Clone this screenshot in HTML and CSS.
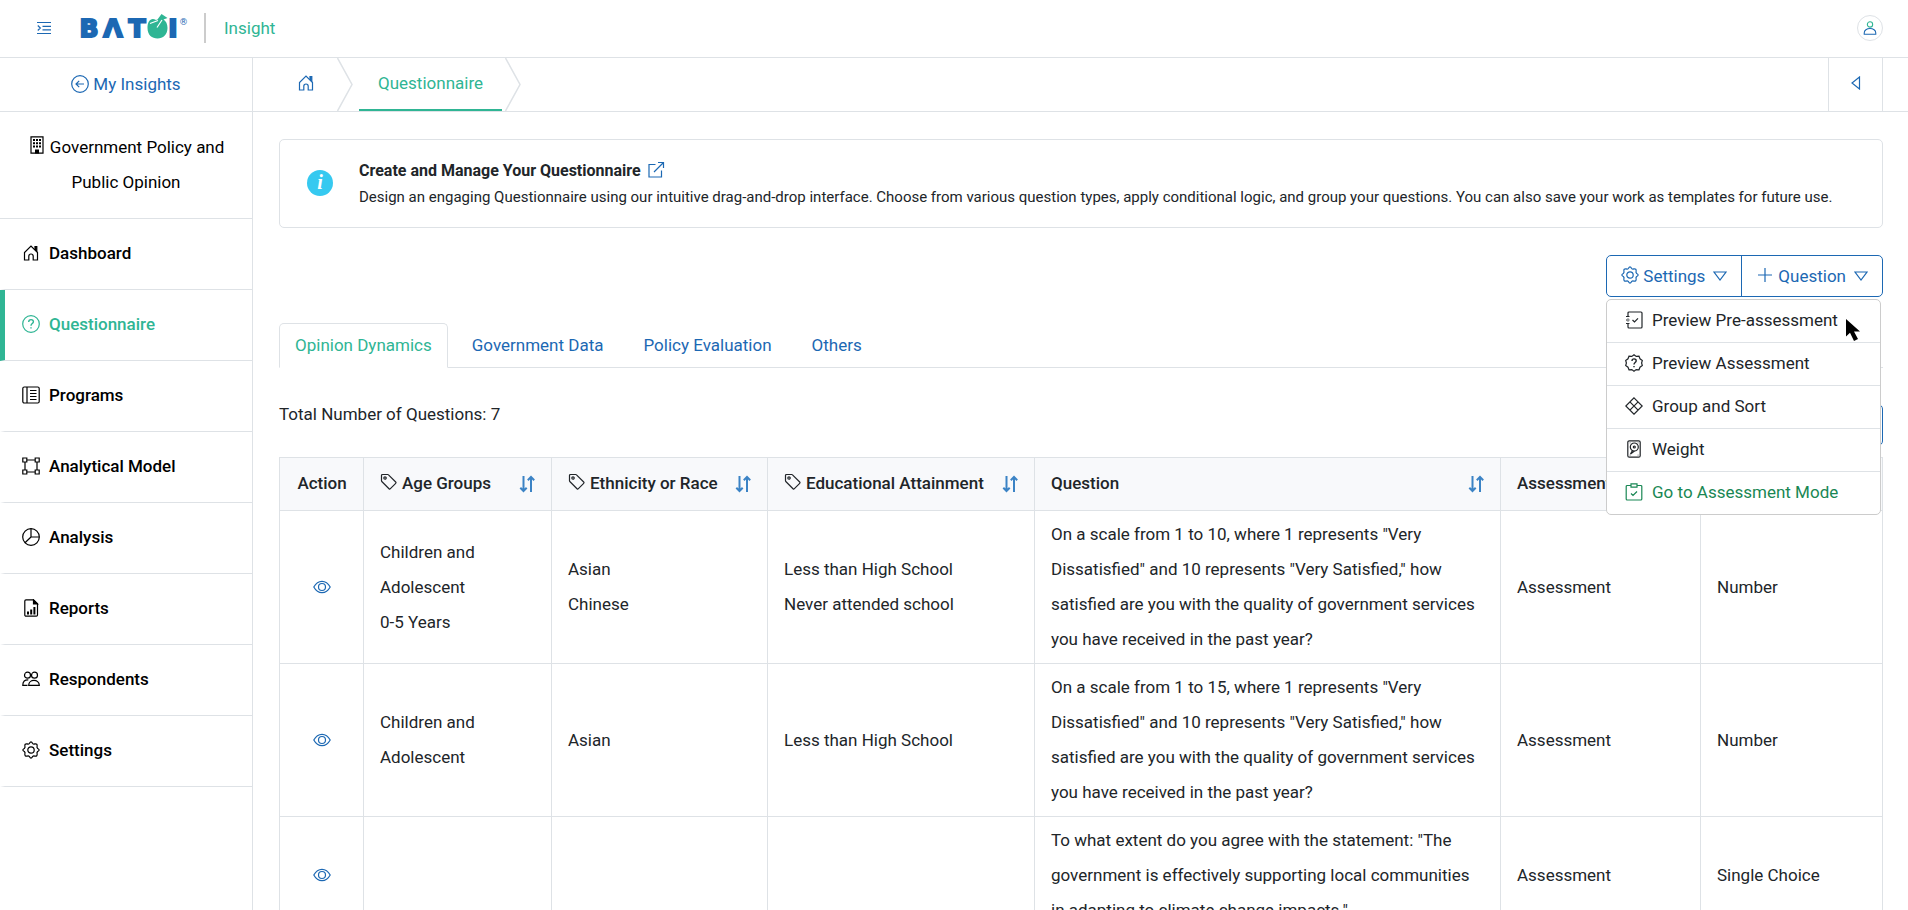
FILE: index.html
```
<!DOCTYPE html>
<html lang="en">
<head>
    <meta charset="UTF-8">
    <meta name="viewport" content="width=device-width, initial-scale=1.0">
    <title>Batoi Insight - Questionnaire</title>
    <link rel="stylesheet" href="styles.css">
</head>
<body>
    <!-- Shared icons -->
    <svg class="sprite" aria-hidden="true">
        <symbol id="i-home" viewBox="0 0 18 18">
            <path d="M2.500 16V8.500L9 2l6.500 6.500V16h-4.300v-3.800a2.200 2.200 0 0 0-4.400 0V16z"/>
            <path d="M13 6V2.500h1.800V8" fill="currentColor"/>
        </symbol>
        <symbol id="i-gear" viewBox="0 0 18 18">
            <circle cx="9" cy="9" r="3.200"/>
            <path d="M7.500 2.300Q9-.6 10.500 2.300 11.500 3.400 12.700 2.900 15.600 2.400 15.100 5.300 14.600 6.500 15.700 7.500 18.600 9 15.700 10.500 14.600 11.500 15.100 12.700 15.600 15.600 12.700 15.100 11.500 14.600 10.500 15.700 9 18.600 7.500 15.700 6.500 14.600 5.300 15.100 2.400 15.600 2.900 12.700 3.400 11.500 2.300 10.500-.6 9 2.300 7.500 3.400 6.500 2.900 5.300 2.400 2.400 5.300 2.900 6.500 3.400 7.500 2.300z"/>
        </symbol>
        <symbol id="i-eye" viewBox="0 0 18 18">
            <path d="M.8 9C3 5 5.800 3.300 9 3.300S15 5 17.200 9C15 13 12.200 14.700 9 14.700S3 13 .8 9z"/>
            <circle cx="9" cy="9" r="3.500"/>
        </symbol>
        <symbol id="i-tag" viewBox="0 0 18 18">
            <path d="M1.500 2.500a1 1 0 0 1 1-1h5.300a1 1 0 0 1 .7.3l7.200 7.200a1 1 0 0 1 0 1.400l-5.300 5.300a1 1 0 0 1-1.400 0L1.800 8.500a1 1 0 0 1-.3-.7z"/>
            <circle cx="5" cy="5" r="1.200"/>
        </symbol>
        <symbol id="i-sort" viewBox="0 0 18 18">
            <path d="M5.500 1V16M2.300 12.800L5.500 16l3.200-3.200M13 17V2M9.800 5.200L13 2l3.200 3.200"/>
        </symbol>
        <symbol id="i-down" viewBox="0 0 14 14">
            <path d="M1 3h12L7 11z"/>
        </symbol>
    </svg>

    <!-- Top header -->
    <header class="topbar">
        <button class="icon-btn" aria-label="Toggle menu">
            <svg class="icon icon-sm" viewBox="0 0 14 14"><path d="M0 1.500h14M5.500 5.300H14M5.500 8.800H14M0 12.500h14M.8 4.500L3.300 7 .8 9.500"/></svg>
        </button>
        <a class="logo" href="#" aria-label="Batoi">
            <svg width="112" height="40" viewBox="0 0 112 40">
                <g class="logo-text">
                    <text x="12" y="29">B</text>
                    <text x="36" y="29">Λ</text>
                    <text x="60" y="29">T</text>
                    <text x="96" y="29">I</text>
                </g>
                <text class="logo-mark" x="102" y="17">®</text>
                <path class="logo-apple" d="M79 12c-5-3-8.500 1-8.500 8s4.500 10.500 10 10.500 10-4 10-10.500c0-4-1.500-7-4-8.500l4-1.500L84.500 6l-4 5.500z"/>
                <path class="logo-leaf" d="M73 15.500l8-3M80 19.500l5-7.500"/>
            </svg>
        </a>
        <a class="product" href="#">Insight</a>
        <button class="avatar" aria-label="Account">
            <svg class="icon" viewBox="0 0 18 18"><circle class="head" cx="9" cy="5" r="3"/><path d="M2.500 16v-1.500a6.500 5 0 0 1 13 0V16z"/></svg>
        </button>
    </header>

    <div class="layout">
        <aside class="sidebar">
            <a class="back" href="#">
                <svg class="icon" viewBox="0 0 18 18"><circle cx="9" cy="9" r="8.300"/><path d="M13 9H5.200M8.200 5.800L5 9l3.200 3.200"/></svg>
                My Insights
            </a>
            <div class="project">
                <svg class="icon" viewBox="0 0 18 18"><path d="M3 .8h12v16.400H3z"/><path d="M9 17.500V13.500" stroke-width="4"/><path d="M5 4h8M5 7.200h8M5 10.400h8" stroke-width="2" stroke-dasharray="2 1"/></svg>
                Government Policy and Public Opinion
            </div>
            <ul class="menu">
                <li><a href="#"><svg class="icon"><use href="#i-home"/></svg>Dashboard</a></li>
                <li class="active"><a href="#"><svg class="icon" viewBox="0 0 18 18"><circle cx="9" cy="9" r="8.300"/><path d="M6.700 7c0-3.200 4.700-3 4.700-.3C11.400 8.500 9 8.600 9 10.700M9 12.200v1.300" stroke-width="1.400"/></svg>Questionnaire</a></li>
                <li><a href="#"><svg class="icon" viewBox="0 0 18 18"><rect x=".8" y="1" width="16.400" height="16" rx="1.500"/><path d="M5 1v16M8 4.500h6.500M8 7.500h6.500M8 10.500h6.500M8 13.500h6.500"/></svg>Programs</a></li>
                <li><a href="#"><svg class="icon" viewBox="0 0 18 18"><path d="M.8 1h4v4h-4zM13.200 1h4v4h-4zM.8 13h4v4h-4zM13.200 13h4v4h-4zM4.800 3h8.400M4.800 15h8.400M3 5v8M15 5v8"/></svg>Analytical Model</a></li>
                <li><a href="#"><svg class="icon" viewBox="0 0 18 18"><circle cx="9" cy="9" r="8.300"/><path d="M9 .7V9h8.300M9 9l-6 5.800"/></svg>Analysis</a></li>
                <li><a href="#"><svg class="icon" viewBox="0 0 18 18"><path d="M4 .8h7.500l4 4V16a1.200 1.200 0 0 1-1.200 1.200H4A1.200 1.200 0 0 1 2.800 16V2A1.200 1.200 0 0 1 4 .8z"/><path d="M11.500 1v4h4z" fill="currentColor"/><path d="M6 15.500v-3M9.200 15.500V10.500M12.400 15.500V8" stroke-width="2"/></svg>Reports</a></li>
                <li><a href="#"><svg class="icon" viewBox="0 0 18 18"><circle cx="5.500" cy="5.200" r="3"/><circle cx="12.500" cy="5.200" r="3"/><path d="M6.700 15.300c0-6.500 10.600-6.500 10.600 0zM5.500 15.300H.8c0-4 2-5.500 5.500-5.400"/></svg>Respondents</a></li>
                <li><a href="#"><svg class="icon"><use href="#i-gear"/></svg>Settings</a></li>
            </ul>
        </aside>

        <main class="main">
            <!-- Breadcrumb -->
            <nav class="breadcrumb">
                <a class="crumb-home" href="#" aria-label="Home"><svg class="icon"><use href="#i-home"/></svg></a>
                <svg class="chevron" viewBox="0 0 16 53"><path d="M.5 0L15 26.500.5 53"/></svg>
                <a class="crumb" href="#">Questionnaire</a>
                <svg class="chevron" viewBox="0 0 16 53"><path d="M.5 0L15 26.500.5 53"/></svg>
                <button class="collapse" aria-label="Open panel">
                    <svg class="icon icon-sm" viewBox="0 0 14 14"><path d="M10.500 1v12L3 7z"/></svg>
                </button>
            </nav>

            <div class="content">
                <section class="info">
                    <svg class="info-icon" viewBox="0 0 26 26"><circle cx="13" cy="13" r="13"/><text x="13" y="19" text-anchor="middle">i</text></svg>
                    <div>
                        <h1>Create and Manage Your Questionnaire
                            <a href="#" aria-label="Open help"><svg class="icon" viewBox="0 0 18 18"><path d="M8.500 3.500H2V16h12.500V9.500M7 11l9-9M11 1.500h5.500V7"/></svg></a>
                        </h1>
                        <p>Design an engaging Questionnaire using our intuitive drag-and-drop interface. Choose from various question types, apply conditional logic, and group your questions. You can also save your work as templates for future use.</p>
                    </div>
                </section>

                <div class="actions">
                    <div class="btn-group">
                        <button class="btn"><svg class="icon"><use href="#i-gear"/></svg>Settings<svg class="icon icon-sm caret"><use href="#i-down"/></svg></button>
                        <button class="btn"><svg class="icon" viewBox="0 0 18 18"><path d="M9 2v14M2 9h14"/></svg>Question<svg class="icon icon-sm caret"><use href="#i-down"/></svg></button>
                    </div>
                    <ul class="dropdown">
                        <li><a href="#"><svg class="icon" viewBox="0 0 18 18"><path d="M3 5V2a1 1 0 0 1 1-1h12a1 1 0 0 1 1 1v14a1 1 0 0 1-1 1H4a1 1 0 0 1-1-1v-3M1 5.500h3.500M1 9h3.500M1 12.500h3.500M3 7v.5M3 10.500v.5M7.500 9l2 2L13 7.300"/></svg>Preview Pre-assessment</a></li>
                        <li><a href="#"><svg class="icon" viewBox="0 0 18 18"><path d="M9 .8l2.200 1.600 2.800-.2 1 2.600 2.300 1.600L16.600 9l.7 2.600L15 13.200l-1 2.600-2.800-.2L9 17.200l-2.200-1.600-2.800.2-1-2.600L.7 11.600 1.400 9 .7 6.400 3 4.800l1-2.600 2.800.2z"/><path d="M7 7c0-2.800 4.200-2.700 4.200-.2C11.200 8.500 9 8.500 9 10.400M9 12v1.300" stroke-width="1.400"/></svg>Preview Assessment</a></li>
                        <li><a href="#"><svg class="icon" viewBox="0 0 18 18"><path d="M9 .8L17.200 9 9 17.200.8 9zM4.900 4.900l8.200 8.200M13.100 4.900l-8.200 8.200"/></svg>Group and Sort</a></li>
                        <li><a href="#"><svg class="icon" viewBox="0 0 18 18"><rect x="2.800" y=".8" width="12.400" height="16.400" rx="1.500"/><circle cx="9.300" cy="7" r="4"/><circle cx="9.300" cy="7" r="1"/><path d="M7.500 10.500L5.500 14l4-3"/><path d="M4.800 2.800h.5M12.800 2.800h.5M4.800 15.200h.5M12.800 15.200h.5"/></svg>Weight</a></li>
                        <li class="go"><a href="#"><svg class="icon" viewBox="0 0 18 18"><path d="M6 2.500H2.200A1 1 0 0 0 1.200 3.500V16a1 1 0 0 0 1 1h13.600a1 1 0 0 0 1-1V3.500a1 1 0 0 0-1-1H12M6 .8h6v3.400H6zM6 10.500l2 2 4-4"/></svg>Go to Assessment Mode</a></li>
                    </ul>
                    <svg class="cursor" viewBox="0 0 15 22"><path d="M0 0v17.500l4-3.800L8 22l4-2-4-7.500h6z"/></svg>
                </div>

                <ul class="tabs">
                    <li><a class="active" href="#">Opinion Dynamics</a></li>
                    <li><a href="#">Government Data</a></li>
                    <li><a href="#">Policy Evaluation</a></li>
                    <li><a href="#">Others</a></li>
                </ul>

                <div class="summary">
                    <span>Total Number of Questions: 7</span>
                    <button class="btn btn-single" aria-label="Filter"></button>
                </div>

                <table class="questions">
                    <colgroup>
                        <col class="c-action"><col class="c-age"><col class="c-race"><col class="c-edu"><col><col class="c-assess"><col class="c-type">
                    </colgroup>
                    <thead>
                        <tr>
                            <th>Action</th>
                            <th><div class="th"><svg class="icon tag"><use href="#i-tag"/></svg>Age Groups<svg class="icon sort"><use href="#i-sort"/></svg></div></th>
                            <th><div class="th"><svg class="icon tag"><use href="#i-tag"/></svg>Ethnicity or Race<svg class="icon sort"><use href="#i-sort"/></svg></div></th>
                            <th><div class="th"><svg class="icon tag"><use href="#i-tag"/></svg>Educational Attainment<svg class="icon sort"><use href="#i-sort"/></svg></div></th>
                            <th><div class="th">Question<svg class="icon sort"><use href="#i-sort"/></svg></div></th>
                            <th><div class="th">Assessment</div></th>
                            <th></th>
                        </tr>
                    </thead>
                    <tbody>
                        <tr>
                            <td><a href="#" aria-label="View"><svg class="icon"><use href="#i-eye"/></svg></a></td>
                            <td>Children and Adolescent<br>0-5 Years</td>
                            <td>Asian<br>Chinese</td>
                            <td>Less than High School<br>Never attended school</td>
                            <td>On a scale from 1 to 10, where 1 represents "Very Dissatisfied" and 10 represents "Very Satisfied," how satisfied are you with the quality of government services you have received in the past year?</td>
                            <td>Assessment</td>
                            <td>Number</td>
                        </tr>
                        <tr>
                            <td><a href="#" aria-label="View"><svg class="icon"><use href="#i-eye"/></svg></a></td>
                            <td>Children and Adolescent</td>
                            <td>Asian</td>
                            <td>Less than High School</td>
                            <td>On a scale from 1 to 15, where 1 represents "Very Dissatisfied" and 10 represents "Very Satisfied," how satisfied are you with the quality of government services you have received in the past year?</td>
                            <td>Assessment</td>
                            <td>Number</td>
                        </tr>
                        <tr>
                            <td><a href="#" aria-label="View"><svg class="icon"><use href="#i-eye"/></svg></a></td>
                            <td></td>
                            <td></td>
                            <td></td>
                            <td>To what extent do you agree with the statement: "The government is effectively supporting local communities in adapting to climate change impacts."</td>
                            <td>Assessment</td>
                            <td>Single Choice</td>
                        </tr>
                    </tbody>
                </table>
            </div>
        </main>
    </div>
</body>
</html>
```
FILE: styles.css
```
* { box-sizing: border-box; }
html, body { height: 100%; }
body { margin: 0; font-family: Roboto, "Liberation Sans", sans-serif; font-size: 17px; line-height: 35px; color: #212529; background-color: #fff; overflow: hidden; display: flex; flex-direction: column; }
a { color: #1c68b3; text-decoration: none; }
ul { list-style: none; margin: 0; padding: 0; }
button { font: inherit; color: #1c68b3; background: none; border: 0; padding: 0; }
.sprite { display: none; }
.icon { width: 18px; height: 18px; flex: none; fill: none; stroke: currentColor; stroke-width: 1.2; }
.icon-sm { width: 14px; height: 14px; }

/* Header */
.topbar { display: flex; align-items: center; flex: none; height: 58px; padding: 0 25px 2px 37px; border-bottom: 1px solid #dee2e6; }
.icon-btn { display: flex; }
.logo { display: flex; margin-left: 26px; }
.logo-text { font: bold 25px "DejaVu Sans", sans-serif; fill: #1c68b3; stroke: #1c68b3; stroke-width: 2; text-anchor: middle; }
.logo-mark { font: 9px "DejaVu Sans", sans-serif; fill: #1c68b3; }
.logo-apple { fill: #2fb594; }
.logo-leaf { fill: none; stroke: #fff; stroke-width: 1.2; }
.product { margin-left: 15px; padding-left: 18px; border-left: 2px solid #ccc; line-height: 30px; color: #2fb594; }
.avatar { display: flex; align-items: center; justify-content: center; width: 26px; height: 26px; margin-left: auto; border: 1px solid #dee2e6; border-radius: 50%; }
.avatar .icon { width: 16px; height: 16px; }
.avatar .head { stroke: #2fb594; }

.layout { display: flex; flex: 1; min-height: 0; }

/* Sidebar */
.sidebar { width: 253px; flex: none; border-right: 1px solid #dee2e6; }
.back { display: flex; align-items: center; justify-content: center; gap: 4px; height: 54px; border-bottom: 1px solid #dee2e6; }
.back .icon, .menu .icon { margin-bottom: 2px; }
.project { padding: 18px 20px; text-align: center; color: #000; border-bottom: 1px solid #dee2e6; }
.project .icon { vertical-align: -1px; }
.menu a { display: flex; align-items: center; gap: 9px; padding: 17px 17px 18px; border-left: 5px solid transparent; border-bottom: 1px solid #dee2e6; color: #000; font-weight: 500; }
.menu .active a { color: #2fb594; border-left-color: #2fb594; }

/* Breadcrumb */
.main { flex: 1; min-width: 0; }
.breadcrumb { display: flex; height: 54px; padding-right: 25px; border-bottom: 1px solid #dee2e6; }
.crumb-home { display: flex; align-items: center; padding: 0 22px 4px 44px; }
.chevron { width: 16px; height: 53px; fill: none; stroke: #dee2e6; stroke-width: 1.5; }
.crumb { margin: 0 3px 0 6px; padding: 8px 19px 0; color: #2fb594; border-bottom: 2px solid #2fb594; }
.collapse { display: flex; align-items: center; justify-content: center; width: 55px; margin-left: auto; padding-bottom: 4px; border: solid #dee2e6; border-width: 0 1px; }

/* Content */
.content { padding: 27px 25px 0 26px; }
.info { display: flex; align-items: center; gap: 26px; padding: 17px 24px 16px 27px; border: 1px solid #dee2e6; border-radius: 5px; }
.info-icon { width: 26px; height: 26px; flex: none; margin-bottom: 2px; fill: #36c9f0; }
.info-icon text { font: italic bold 20px "Liberation Serif", serif; fill: #fff; }
.info h1 { margin: 0; font-size: 16px; font-weight: 700; line-height: 27px; }
.info h1 a { margin-left: 2px; }
.info h1 .icon { vertical-align: -3px; }
.info p { margin: 0; font-size: 15px; line-height: 27px; }

.actions { position: relative; display: flex; justify-content: flex-end; margin-top: 27px; }
.btn-group { display: flex; border: 1px solid #1c68b3; border-radius: 5px; }
.btn { display: flex; align-items: center; gap: 4px; height: 40px; padding: 0 14px; }
.btn .icon { margin-bottom: 2px; }
.btn .caret { margin: 0 0 0 4px; }
.btn + .btn { border-left: 1px solid #1c68b3; }
.dropdown { position: absolute; top: 44px; right: 2px; width: 275px; z-index: 2; background-color: #fff; border: 1px solid #ccc; border-radius: 5px; }
.dropdown a { display: flex; align-items: center; gap: 9px; padding: 3px 18px 4px; color: #212529; }
.dropdown .icon { margin-bottom: 2px; }
.dropdown li + li { border-top: 1px solid #dee2e6; }
.dropdown .go a { color: #198754; }
.cursor { position: absolute; top: 64px; right: 22px; width: 15px; height: 22px; z-index: 3; }

.tabs { display: flex; gap: 8px; margin-top: 26px; border-bottom: 1px solid #dee2e6; }
.tabs a { display: block; margin-bottom: -1px; padding: 4px 15px; border: 1px solid transparent; border-radius: 5px 5px 0 0; }
.tabs .active { color: #2fb594; background-color: #fff; border-color: #dee2e6 #dee2e6 #fff; }

.summary { display: flex; align-items: flex-start; justify-content: space-between; padding-top: 29px; }
.btn-single { width: 120px; height: 42px; margin-top: 7px; border: 1px solid #1c68b3; border-radius: 5px; }

.questions { width: 100%; margin-top: 11px; table-layout: fixed; border-collapse: collapse; }
.questions th, .questions td { padding: 6px 16px; border: 1px solid #dee2e6; text-align: left; vertical-align: middle; }
.questions th { padding: 8px 15px 9px 16px; font-weight: 500; background-color: #f8f9fb; }
.questions th:first-child, .questions td:first-child { text-align: center; }
.questions td .icon { vertical-align: -3px; }
.th { display: flex; align-items: center; gap: 4px; white-space: nowrap; }
.tag { margin-bottom: 4px; }
.sort { margin-left: auto; color: #3b83c5; stroke-width: 2; }
.c-action { width: 84px; }
.c-age { width: 188px; }
.c-race { width: 216px; }
.c-edu { width: 267px; }
.c-assess { width: 200px; }
.c-type { width: 182px; }
```
